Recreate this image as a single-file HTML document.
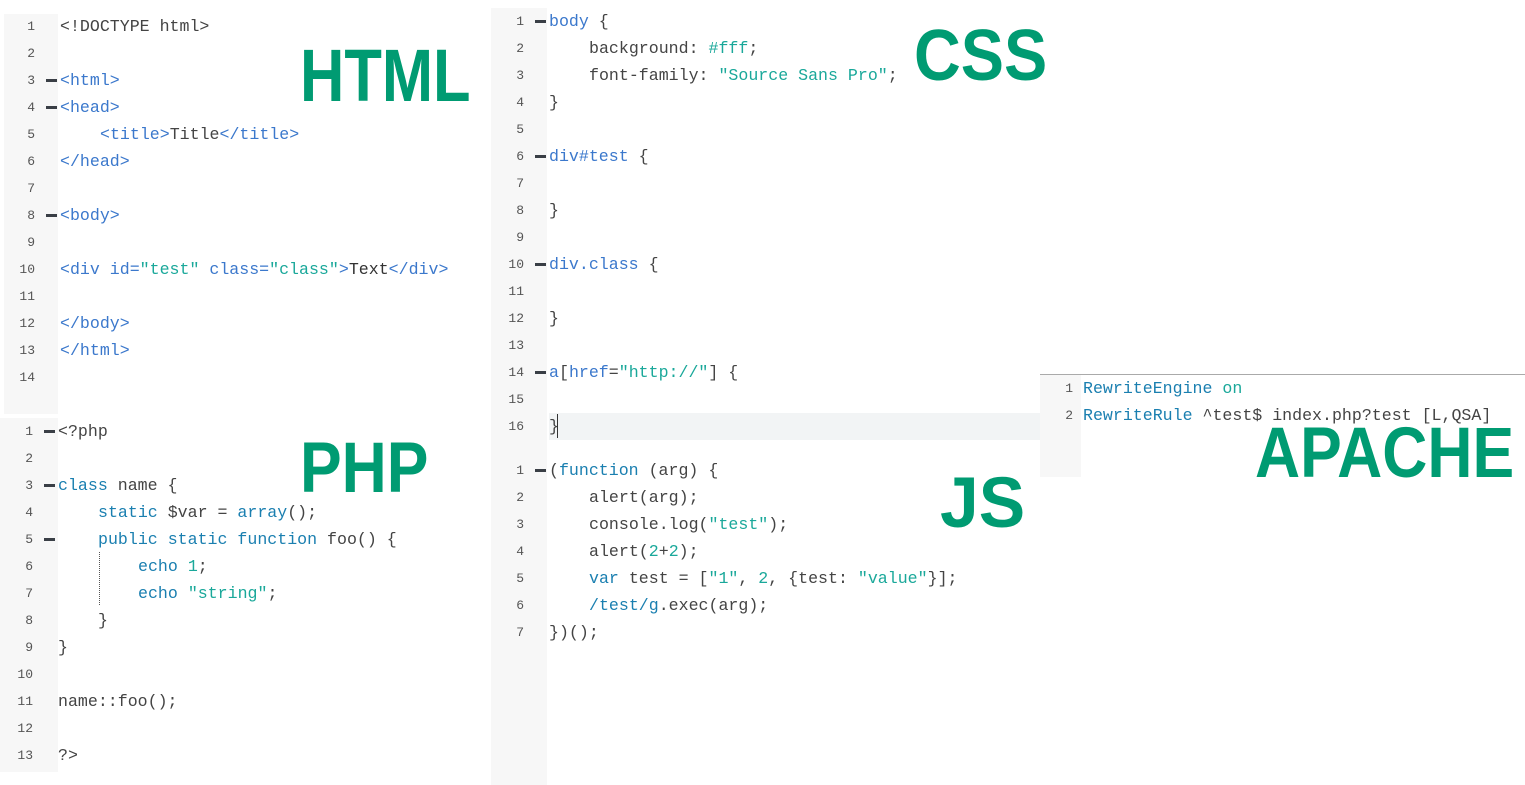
<!DOCTYPE html>
<html><head><style>
body{margin:0;width:1525px;height:785px;background:#fff;position:relative;overflow:hidden;font-family:"Liberation Mono",monospace;font-size:16.6px;color:#444}
.g{position:absolute;background:#f7f7f7}
.n{position:absolute;width:40px;text-align:right;font-size:13px;color:#555;line-height:27px;height:27px}
.c{position:absolute;white-space:pre;line-height:27px;height:27px}
.f{position:absolute;width:11px;height:3px;background:#3a3f46}
.t{color:#3b78cc}.s{color:#1aa89a}.k{color:#1a7fb0}.v{color:#333}
.big{position:absolute;font-family:"Liberation Sans",sans-serif;font-weight:bold;color:#009b72;transform-origin:0 0;line-height:1}
</style></head><body>
<div class="g" style="left:4px;top:14px;width:54px;height:400px"></div>
<div class="g" style="left:0;top:418px;width:58px;height:354px"></div>
<div class="g" style="left:491px;top:8px;width:56px;height:777px"></div>
<div class="g" style="left:1040px;top:375px;width:41px;height:102px"></div>
<div style="position:absolute;left:1040px;top:374px;width:485px;height:1px;background:#aaa"></div>
<div style="position:absolute;left:549px;top:413px;width:491px;height:27px;background:#f2f4f5"></div>
<div style="position:absolute;left:557px;top:414px;width:1px;height:24px;background:#333"></div>
<div style="position:absolute;left:99px;top:552px;width:0;height:53px;border-left:1px dotted #555"></div>

<div class="n" style="left:-5px;top:13px">1</div><div class="c" style="left:60px;top:13px">&lt;!DOCTYPE html&gt;</div>
<div class="n" style="left:-5px;top:40px">2</div>
<div class="n" style="left:-5px;top:67px">3</div><div class="f" style="left:46px;top:79px"></div><div class="c t" style="left:60px;top:67px">&lt;html&gt;</div>
<div class="n" style="left:-5px;top:94px">4</div><div class="f" style="left:46px;top:106px"></div><div class="c t" style="left:60px;top:94px">&lt;head&gt;</div>
<div class="n" style="left:-5px;top:121px">5</div><div class="c" style="left:100px;top:121px"><span class="t">&lt;title&gt;</span>Title<span class="t">&lt;/title&gt;</span></div>
<div class="n" style="left:-5px;top:148px">6</div><div class="c t" style="left:60px;top:148px">&lt;/head&gt;</div>
<div class="n" style="left:-5px;top:175px">7</div>
<div class="n" style="left:-5px;top:202px">8</div><div class="f" style="left:46px;top:214px"></div><div class="c t" style="left:60px;top:202px">&lt;body&gt;</div>
<div class="n" style="left:-5px;top:229px">9</div>
<div class="n" style="left:-5px;top:256px">10</div><div class="c t" style="left:60px;top:256px">&lt;div id=<span class="s">"test"</span> class=<span class="s">"class"</span>&gt;<span class="v">Text</span>&lt;/div&gt;</div>
<div class="n" style="left:-5px;top:283px">11</div>
<div class="n" style="left:-5px;top:310px">12</div><div class="c t" style="left:60px;top:310px">&lt;/body&gt;</div>
<div class="n" style="left:-5px;top:337px">13</div><div class="c t" style="left:60px;top:337px">&lt;/html&gt;</div>
<div class="n" style="left:-5px;top:364px">14</div>

<div class="n" style="left:-7px;top:418px">1</div><div class="f" style="left:44px;top:430px"></div><div class="c" style="left:58px;top:418px">&lt;?php</div>
<div class="n" style="left:-7px;top:445px">2</div>
<div class="n" style="left:-7px;top:472px">3</div><div class="f" style="left:44px;top:484px"></div><div class="c" style="left:58px;top:472px"><span class="k">class</span> name {</div>
<div class="n" style="left:-7px;top:499px">4</div><div class="c" style="left:98px;top:499px"><span class="k">static</span> $var = <span class="k">array</span>();</div>
<div class="n" style="left:-7px;top:526px">5</div><div class="f" style="left:44px;top:538px"></div><div class="c" style="left:98px;top:526px"><span class="k">public static function</span> foo() {</div>
<div class="n" style="left:-7px;top:553px">6</div><div class="c" style="left:138px;top:553px"><span class="k">echo</span> <span class="s">1</span>;</div>
<div class="n" style="left:-7px;top:580px">7</div><div class="c" style="left:138px;top:580px"><span class="k">echo</span> <span class="s">"string"</span>;</div>
<div class="n" style="left:-7px;top:607px">8</div><div class="c" style="left:98px;top:607px">}</div>
<div class="n" style="left:-7px;top:634px">9</div><div class="c" style="left:58px;top:634px">}</div>
<div class="n" style="left:-7px;top:661px">10</div>
<div class="n" style="left:-7px;top:688px">11</div><div class="c" style="left:58px;top:688px">name::foo();</div>
<div class="n" style="left:-7px;top:715px">12</div>
<div class="n" style="left:-7px;top:742px">13</div><div class="c" style="left:58px;top:742px">?&gt;</div>

<div class="n" style="left:484px;top:8px">1</div><div class="f" style="left:535px;top:20px"></div><div class="c" style="left:549px;top:8px"><span class="t">body</span> {</div>
<div class="n" style="left:484px;top:35px">2</div><div class="c" style="left:589px;top:35px">background: <span class="s">#fff</span>;</div>
<div class="n" style="left:484px;top:62px">3</div><div class="c" style="left:589px;top:62px">font-family: <span class="s">"Source Sans Pro"</span>;</div>
<div class="n" style="left:484px;top:89px">4</div><div class="c" style="left:549px;top:89px">}</div>
<div class="n" style="left:484px;top:116px">5</div>
<div class="n" style="left:484px;top:143px">6</div><div class="f" style="left:535px;top:155px"></div><div class="c" style="left:549px;top:143px"><span class="t">div#test</span> {</div>
<div class="n" style="left:484px;top:170px">7</div>
<div class="n" style="left:484px;top:197px">8</div><div class="c" style="left:549px;top:197px">}</div>
<div class="n" style="left:484px;top:224px">9</div>
<div class="n" style="left:484px;top:251px">10</div><div class="f" style="left:535px;top:263px"></div><div class="c" style="left:549px;top:251px"><span class="t">div.class</span> {</div>
<div class="n" style="left:484px;top:278px">11</div>
<div class="n" style="left:484px;top:305px">12</div><div class="c" style="left:549px;top:305px">}</div>
<div class="n" style="left:484px;top:332px">13</div>
<div class="n" style="left:484px;top:359px">14</div><div class="f" style="left:535px;top:371px"></div><div class="c" style="left:549px;top:359px"><span class="t">a</span>[<span class="t">href</span>=<span class="s">"http://"</span>] {</div>
<div class="n" style="left:484px;top:386px">15</div>
<div class="n" style="left:484px;top:413px">16</div><div class="c" style="left:549px;top:413px">}</div>

<div class="n" style="left:484px;top:457px">1</div><div class="f" style="left:535px;top:469px"></div><div class="c" style="left:549px;top:457px">(<span class="k">function</span> (arg) {</div>
<div class="n" style="left:484px;top:484px">2</div><div class="c" style="left:589px;top:484px">alert(arg);</div>
<div class="n" style="left:484px;top:511px">3</div><div class="c" style="left:589px;top:511px">console.log(<span class="s">"test"</span>);</div>
<div class="n" style="left:484px;top:538px">4</div><div class="c" style="left:589px;top:538px">alert(<span class="s">2</span>+<span class="s">2</span>);</div>
<div class="n" style="left:484px;top:565px">5</div><div class="c" style="left:589px;top:565px"><span class="k">var</span> test = [<span class="s">"1"</span>, <span class="s">2</span>, {test: <span class="s">"value"</span>}];</div>
<div class="n" style="left:484px;top:592px">6</div><div class="c" style="left:589px;top:592px"><span class="k">/test/g</span>.exec(arg);</div>
<div class="n" style="left:484px;top:619px">7</div><div class="c" style="left:549px;top:619px">})();</div>

<div class="n" style="left:1033px;top:375px">1</div><div class="c" style="left:1083px;top:375px"><span class="k">RewriteEngine</span> <span class="s">on</span></div>
<div class="n" style="left:1033px;top:402px">2</div><div class="c" style="left:1083px;top:402px"><span class="k">RewriteRule</span> ^test$ index.php?test [L,QSA]</div>

<div class="big" style="left:300px;top:39px;font-size:74px;transform:scaleX(0.83)">HTML</div>
<div class="big" style="left:914px;top:20px;font-size:72px;transform:scaleX(0.9)">CSS</div>
<div class="big" style="left:300px;top:433px;font-size:71px;transform:scaleX(0.88)">PHP</div>
<div class="big" style="left:940px;top:468px;font-size:71px;transform:scaleX(0.98)">JS</div>
<div class="big" style="left:1255px;top:418px;font-size:71px;transform:scaleX(0.88)">APACHE</div>
</body></html>
